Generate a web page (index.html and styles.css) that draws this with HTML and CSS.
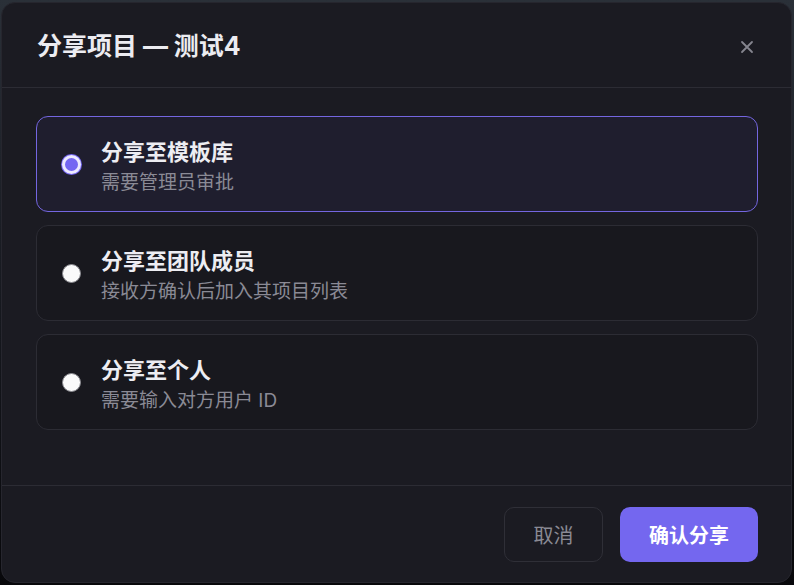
FILE: index.html
```html
<!DOCTYPE html>
<html lang="zh-CN">
<head>
<meta charset="utf-8">
<title>分享项目</title>
<link rel="stylesheet" href="styles.css">
</head>
<body>
<div class="modal">
  <header class="modal-header">
    <h2 class="modal-title">分享项目 — 测试4</h2>
    <button class="close-btn" aria-label="关闭">
      <svg width="14" height="14" viewBox="0 0 14 14"><path d="M2 2 L12 12 M12 2 L2 12" stroke="currentColor" stroke-width="1.8" stroke-linecap="round"/></svg>
    </button>
  </header>
  <div class="modal-body">
    <label class="option selected">
      <span class="radio checked"></span>
      <span class="option-text">
        <span class="option-title">分享至模板库</span>
        <span class="option-sub">需要管理员审批</span>
      </span>
    </label>
    <label class="option">
      <span class="radio"></span>
      <span class="option-text">
        <span class="option-title">分享至团队成员</span>
        <span class="option-sub">接收方确认后加入其项目列表</span>
      </span>
    </label>
    <label class="option">
      <span class="radio"></span>
      <span class="option-text">
        <span class="option-title">分享至个人</span>
        <span class="option-sub">需要输入对方用户 ID</span>
      </span>
    </label>
  </div>
  <footer class="modal-footer">
    <button class="btn btn-cancel">取消</button>
    <button class="btn btn-primary">确认分享</button>
  </footer>
</div>
</body>
</html>
```
FILE: styles.css
```css
* { box-sizing: border-box; }
html, body { margin: 0; padding: 0; }
body {
  width: 794px;
  height: 585px;
  overflow: hidden;
  background: linear-gradient(180deg, #2a3038 0%, #1a1d24 40%, #08080b 100%);
  font-family: "Inter", "Noto Sans CJK SC", "Noto Sans", sans-serif;
  padding-top: 2px;
}
.modal {
  margin-left: 1px;
  width: 791px;
  height: 581px;
  background: #1b1b22;
  border: 1px solid #26262e;
  border-radius: 14px;
  display: flex;
  flex-direction: column;
  overflow: hidden;
}
.modal-header {
  height: 85px;
  flex: none;
  display: flex;
  align-items: center;
  justify-content: space-between;
  padding: 0 37px 0 35px;
  border-bottom: 1px solid #2c2c34;
}
.modal-title {
  margin: 0;
  font-size: 25px;
  font-weight: 700;
  color: #ececf1;
  line-height: 1;
  padding-top: 2px;
}
.close-btn {
  background: none;
  border: none;
  padding: 0;
  color: #85858f;
  width: 14px;
  height: 14px;
  display: flex;
  margin-top: 4px;
}
.modal-body {
  flex: 1;
  padding: 28px 33px 0 34px;
  display: flex;
  flex-direction: column;
  gap: 13px;
}
.option {
  height: 96px;
  border: 1px solid #2c2c34;
  border-radius: 12px;
  background: #18181e;
  display: flex;
  align-items: center;
  padding: 0 24px 0 25px;
  gap: 20px;
}
.option.selected {
  border-color: #7466e0;
  background: #1f1e2e;
}
.radio {
  width: 19px;
  height: 19px;
  border-radius: 50%;
  background: #fafafa;
  border: 1px solid #8a8a90;
  flex: none;
}
.radio.checked {
  background: #7466f2;
  border: 3px solid #ece9ff;
  box-shadow: 0 0 0 1px #7466f2;
}
.option-text {
  display: flex;
  flex-direction: column;
  padding-top: 5px;
}
.option-title {
  font-size: 22px;
  font-weight: 700;
  color: #ededf2;
  line-height: 28px;
}
.option-sub {
  font-size: 19px;
  color: #8a8a95;
  line-height: 26px;
  margin-top: 4px;
}
.modal-footer {
  flex: none;
  border-top: 1px solid #2c2c34;
  padding: 21px 33px 20px 34px;
  display: flex;
  justify-content: flex-end;
  gap: 17px;
}
.btn {
  height: 55px;
  border-radius: 10px;
  font-family: inherit;
  font-size: 20px;
  padding: 0 28px;
  cursor: pointer;
}
.btn-cancel {
  width: 99px;
  background: transparent;
  border: 1px solid #2f2f37;
  color: #8a8a94;
}
.btn-primary {
  width: 138px;
  background: #7467ef;
  border: none;
  color: #ffffff;
  font-weight: 700;
}
```
